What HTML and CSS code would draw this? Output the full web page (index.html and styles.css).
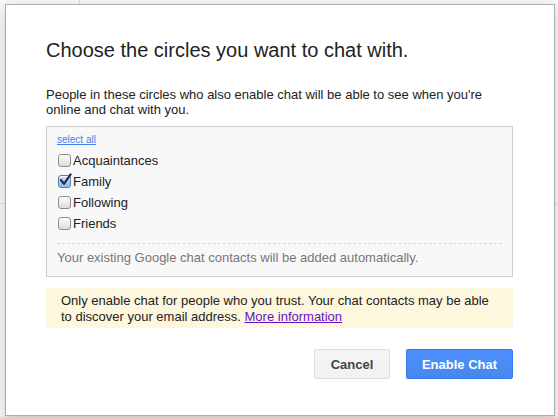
FILE: index.html
```html
<!DOCTYPE html>
<html>
<head>
<meta charset="utf-8">
<link rel="stylesheet" href="styles.css">
</head>
<body>
<div class="page">
  <div class="vline"></div>
  <div class="hline"></div>
  <div class="bottom-strip"></div>
</div>
<div class="dialog">
  <h1 class="title">Choose the circles you want to chat with.</h1>
  <p class="desc">People in these circles who also enable chat will be able to see when you're online and chat with you.</p>
  <div class="box">
    <a class="select-all" href="#">select all</a>
    <div class="row"><span class="cb"></span><span class="label">Acquaintances</span></div>
    <div class="row"><span class="cb checked"><svg width="15" height="15" viewBox="0 0 15 15"><path d="M3 7.2 L6 10.8 L12.6 1.4" fill="none" stroke="#1f2f47" stroke-width="2.2" stroke-linecap="round" stroke-linejoin="round"/></svg></span><span class="label">Family</span></div>
    <div class="row"><span class="cb"></span><span class="label">Following</span></div>
    <div class="row"><span class="cb"></span><span class="label">Friends</span></div>
    <div class="note">Your existing Google chat contacts will be added automatically.</div>
  </div>
  <div class="warning">Only enable chat for people who you trust. Your chat contacts may be able to discover your email address. <a class="more" href="#">More information</a></div>
  <div class="buttons">
    <button class="btn cancel">Cancel</button>
    <button class="btn primary">Enable Chat</button>
  </div>
</div>
</body>
</html>
```
FILE: styles.css
```css
html, body {
  margin: 0;
  padding: 0;
  width: 558px;
  height: 418px;
  overflow: hidden;
  background: #fff;
  font-family: "Liberation Sans", Arial, sans-serif;
}
.page {
  position: absolute;
  left: 0;
  top: 0;
  width: 558px;
  height: 418px;
  background: #fbfbfb;
}
.vline {
  position: absolute;
  left: 79px;
  top: 0;
  width: 1px;
  height: 418px;
  background: #e0e0e0;
}
.hline {
  position: absolute;
  left: 0;
  top: 203px;
  width: 558px;
  height: 1px;
  background: #e4e4e4;
}
.bottom-strip {
  position: absolute;
  left: 0;
  top: 416px;
  width: 558px;
  height: 2px;
  background: #ececec;
}
.dialog {
  position: absolute;
  left: 5px;
  top: 4px;
  width: 467px;
  padding: 33px 41px 36px 40px;
  background: #fff;
  border: 1px solid #acacac;
  box-shadow: 0 4px 16px rgba(0,0,0,0.2);
}
.title {
  margin: 0;
  font-size: 20px;
  line-height: 24px;
  font-weight: normal;
  color: #222;
}
.desc {
  margin: 25px 0 0 0;
  font-size: 13px;
  line-height: 15px;
  color: #222;
}
.box {
  margin-top: 9px;
  border: 1px solid #cfcfcf;
  background: #f8f8f8;
  padding: 7px 10px 11px 10px;
}
.select-all {
  display: block;
  font-size: 10px;
  line-height: 12px;
  color: #3f7ff0;
  text-decoration: underline;
  margin-bottom: 4px;
}
.row {
  display: flex;
  align-items: center;
  height: 21px;
  font-size: 13px;
  color: #222;
}
.cb {
  position: relative;
  box-sizing: border-box;
  width: 13px;
  height: 13px;
  margin-left: 1px;
  margin-right: 2px;
  border: 1px solid #8e8e8e;
  border-radius: 3px;
  background: linear-gradient(#fdfdfd, #dcdcdc);
  box-shadow: inset 0 1px 0 #fff;
}
.cb.checked {
  border-color: #5c7fa8;
  background: linear-gradient(#cfe3fb, #8db8ea);
}
.cb svg {
  position: absolute;
  left: -1px;
  top: -3px;
}
.note {
  margin-top: 9px;
  border-top: 1px dashed #dadada;
  padding-top: 6px;
  font-size: 13px;
  line-height: 15px;
  color: #777;
}
.warning {
  margin-top: 11px;
  background: #fdf7dd;
  padding: 5px 20px 3px 15px;
  font-size: 13px;
  line-height: 16px;
  color: #222;
}
.more {
  color: #6611cc;
  text-decoration: underline;
}
.buttons {
  margin-top: 21px;
  display: flex;
  justify-content: flex-end;
  gap: 16px;
}
.btn {
  height: 30px;
  box-sizing: border-box;
  border-radius: 2px;
  font-family: "Liberation Sans", Arial, sans-serif;
  font-size: 13px;
  font-weight: bold;
  padding: 0;
}
.cancel {
  width: 76px;
  color: #444;
  background: linear-gradient(#f5f5f5, #f1f1f1);
  border: 1px solid #dcdcdc;
}
.primary {
  width: 107px;
  color: #fff;
  background: linear-gradient(#4d90fe, #4787ed);
  border: 1px solid #3079ed;
}
```
